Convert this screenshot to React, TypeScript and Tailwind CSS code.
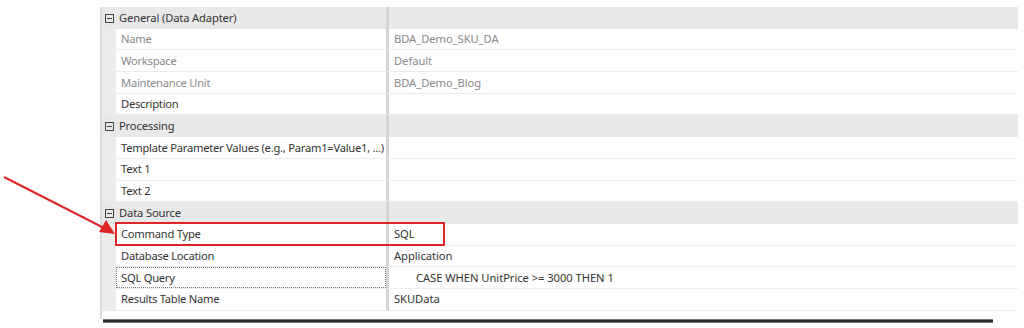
import React from "react";

type Row =
  | { kind: "header"; label: string }
  | { kind: "row"; label: string; value?: string; muted?: boolean; focus?: boolean; indent?: boolean };

const rows: Row[] = [
  { kind: "header", label: "General (Data Adapter)" },
  { kind: "row", label: "Name", value: "BDA_Demo_SKU_DA", muted: true },
  { kind: "row", label: "Workspace", value: "Default", muted: true },
  { kind: "row", label: "Maintenance Unit", value: "BDA_Demo_Blog", muted: true },
  { kind: "row", label: "Description" },
  { kind: "header", label: "Processing" },
  { kind: "row", label: "Template Parameter Values (e.g., Param1=Value1, ...)" },
  { kind: "row", label: "Text 1" },
  { kind: "row", label: "Text 2" },
  { kind: "header", label: "Data Source" },
  { kind: "row", label: "Command Type", value: "SQL" },
  { kind: "row", label: "Database Location", value: "Application" },
  { kind: "row", label: "SQL Query", value: "CASE WHEN UnitPrice >= 3000 THEN 1", focus: true, indent: true },
  { kind: "row", label: "Results Table Name", value: "SKUData" },
];

function Minus() {
  return (
    <svg width="9" height="9" viewBox="0 0 9 9" className="shrink-0">
      <rect x="0.5" y="0.5" width="8" height="8" fill="none" stroke="#444" strokeWidth="1" />
      <line x1="2" y1="4.5" x2="7" y2="4.5" stroke="#444" strokeWidth="1" />
    </svg>
  );
}

export default function App() {
  return (
    <div
      className="relative w-[1024px] h-[328px] bg-white overflow-hidden"
      style={{ fontFamily: '"Noto Sans", "Open Sans", sans-serif' }}
    >
      <div className="pt-[7px] pl-[100px] w-[1018px]">
        <div className="flex flex-col border-l-2 border-[#dcdcdc] bg-[#ececec]">
          {rows.map((r, i) =>
            r.kind === "header" ? (
              <div key={i} className="flex h-[21.7px] items-center bg-[#e9e9e9]">
                <div className="flex w-[284px] items-center gap-[5px] pl-[3px] pt-[1px] h-full text-[11.2px] tracking-[-0.15px] text-[#333]">
                  <Minus />
                  <span>{r.label}</span>
                </div>
                <div className="w-[3px] h-full bg-[#d4d4d4]" />
                <div className="flex-1 h-full" />
              </div>
            ) : (
              <div key={i} className="flex h-[21.7px] ml-[14px] bg-white border-b border-[#ececec]">
                <div
                  className={`relative flex w-[270px] items-center pl-[5px] pt-[1px] h-full text-[11.2px] tracking-[-0.25px] ${
                    r.muted ? "text-[#8a8a8a]" : "text-[#333]"
                  }`}
                >
                  <span className="whitespace-nowrap">{r.label}</span>
                  {r.focus && (
                    <div className="absolute inset-0 border border-dotted border-[#777]" />
                  )}
                </div>
                <div className="w-[3px] h-full bg-[#d4d4d4]" />
                <div
                  className={`flex flex-1 items-center h-full pt-[1px] text-[11.2px] tracking-[-0.05px] ${
                    r.indent ? "pl-[27px]" : "pl-[5px]"
                  } ${r.muted ? "text-[#8a8a8a]" : "text-[#333]"}`}
                >
                  <span className="whitespace-nowrap">{r.value}</span>
                </div>
              </div>
            )
          )}
        </div>
        <div className="h-[8px] w-[2px] bg-[#dcdcdc]" />
        <div className="ml-[3px] w-[890px] h-[4px] bg-[#2a2a2a] border-y border-[#777]" />
      </div>

      {/* red highlight box */}
      <div className="absolute left-[115px] top-[222px] w-[330px] h-[24px] border-2 border-[#dc2626]" />

      {/* arrow */}
      <svg className="absolute left-0 top-0" width="130" height="250" viewBox="0 0 130 250">
        <line x1="4" y1="177" x2="104" y2="228" stroke="#dc2626" strokeWidth="2" />
        <polygon points="115,234 99,232 106,220" fill="#dc2626" />
      </svg>
    </div>
  );
}
